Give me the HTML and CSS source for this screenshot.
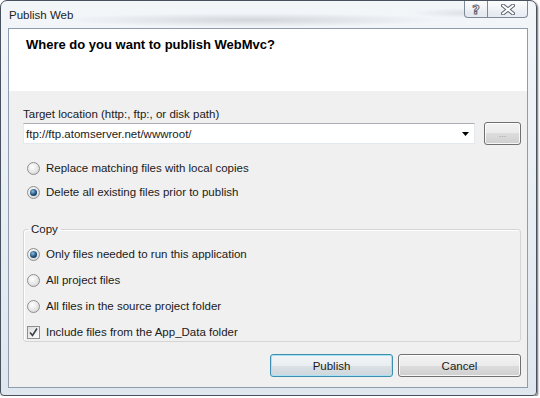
FILE: index.html
```html
<!DOCTYPE html>
<html lang="en">
  <head>
    <meta charset="UTF-8" />
    <title>Publish Web</title>
    <link rel="stylesheet" href="styles.css">
  </head>
  <body>
    <div class="window">
      <div class="titlebar">
        <span class="title">Publish Web</span>
        <div class="caption-buttons">
          <span class="cap-btn help">?</span>
          <span class="cap-btn close">
            <svg width="14" height="11" viewBox="0 0 14 11">
              <path d="M2 1.5 L12 9.5 M12 1.5 L2 9.5" stroke="#5a6470" stroke-width="4" stroke-linecap="round" fill="none" />
              <path d="M2 1.5 L12 9.5 M12 1.5 L2 9.5" stroke="#fff" stroke-width="2" stroke-linecap="round" fill="none" />
            </svg>
          </span>
        </div>
      </div>

      <div class="client">
        <div class="header">
          <h1>Where do you want to publish WebMvc?</h1>
        </div>

        <div class="content">
          <label class="field-label">Target location (http:, ftp:, or disk path)</label>
          <div class="location-row">
            <div class="combo">
              <span>ftp://ftp.atomserver.net/wwwroot/</span>
              <svg width="7" height="4" viewBox="0 0 7 4"><path d="M0 0 H7 L3.5 4 Z" fill="#000" /></svg>
            </div>
            <button class="btn browse">...</button>
          </div>

          <div class="options">
            <div class="option"><span class="radio"></span>Replace matching files with local copies</div>
            <div class="option"><span class="radio checked"></span>Delete all existing files prior to publish</div>
          </div>

          <fieldset class="group">
            <legend>Copy</legend>
            <div class="group-body">
              <div class="option"><span class="radio checked"></span>Only files needed to run this application</div>
              <div class="option"><span class="radio"></span>All project files</div>
              <div class="option"><span class="radio"></span>All files in the source project folder</div>
              <div class="option">
                <span class="checkbox">
                  <svg width="11" height="11" viewBox="0 0 11 11"><path d="M2 5.5 L4.5 8.5 L9 1.5" stroke="#3a3f4a" stroke-width="1.6" fill="none" /></svg>
                </span>
                Include files from the App_Data folder
              </div>
            </div>
          </fieldset>

          <div class="actions">
            <button class="btn default">Publish</button>
            <button class="btn">Cancel</button>
          </div>
        </div>
      </div>
    </div>
  </body>
</html>
```

FILE: styles.css
```css
body {
  margin: 0;
  font-family: "Liberation Sans", Arial, sans-serif;
  font-size: 11.5px;
  color: #1a1a1a;
  background: #ffffff;
}
.window {
  box-sizing: border-box;
  width: 537px;
  height: 396px;
  padding: 0 8px 7px 7px;
  border: 1px solid #48525e;
  border-radius: 7px 7px 4px 4px;
  /* blurred glass behind the title */
  background:
    radial-gradient(ellipse 190px 7px at 250px 19px, rgba(150, 158, 168, 0.35), rgba(150, 158, 168, 0) 100%),
    radial-gradient(ellipse 60px 5px at 470px 12px, rgba(150, 158, 168, 0.25), rgba(150, 158, 168, 0) 100%),
    linear-gradient(#f3f6f9, #dfe6ee);
  box-shadow: 1px 1px 2px rgba(0, 0, 0, 0.6);
  display: flex;
  flex-direction: column;
}
.titlebar {
  height: 27px;
  display: flex;
  justify-content: space-between;
  align-items: flex-start;
}
.title {
  padding: 7px 0 0 1px;
  line-height: 14px;
  color: #222;
}
.caption-buttons {
  display: flex;
}
.cap-btn {
  box-sizing: border-box;
  height: 17px;
  border: 1px solid #7f8a96;
  border-top: none;
  background: linear-gradient(rgba(255, 255, 255, 0.7), rgba(225, 232, 240, 0.7));
  display: flex;
  align-items: center;
  justify-content: center;
}
.help {
  width: 24px;
  border-radius: 0 0 0 4px;
  font-family: "DejaVu Sans", sans-serif;
  font-weight: bold;
  font-size: 13px;
  color: #fff;
  -webkit-text-stroke: 1px #5a6470;
}
.close {
  width: 40px;
  border-left: none;
  border-radius: 0 0 4px 0;
}
.client {
  box-sizing: border-box;
  height: 360px;
  border: 1px solid #8e9cad;
  background: #f0f0f0;
  display: flex;
  flex-direction: column;
}
.header {
  box-sizing: border-box;
  height: 62px;
  padding: 8px 0 0 17px;
  background: #ffffff;
}
.header h1 {
  margin: 0;
  font-size: 13px;
  line-height: 15px;
  color: #000;
}
.content {
  flex: 1;
  padding: 16px 6px 0 14px;
  display: flex;
  flex-direction: column;
}
.field-label {
  display: block;
  line-height: 15px;
}
.location-row {
  height: 23px;
  display: flex;
  align-items: center;
  gap: 9px;
}
.combo {
  flex: 1;
  box-sizing: border-box;
  height: 21px;
  padding: 0 5px 0 2px;
  border: 1px solid #e3e9ef;
  border-top-color: #abadb3;
  background: #ffffff;
  display: flex;
  align-items: center;
  justify-content: space-between;
}
.btn {
  box-sizing: border-box;
  height: 23px;
  padding: 0;
  font: inherit;
  color: #1a1a1a;
  border: 1px solid #707070;
  border-radius: 3px;
  background: linear-gradient(#f2f2f2 0%, #ebebeb 50%, #dddddd 50%, #cfcfcf 100%);
  box-shadow: inset 0 0 0 1px rgba(255, 255, 255, 0.8);
}
.browse {
  width: 37px;
  color: #a0a0a0;
  font-size: 9px;
}
.btn.default {
  border-color: #3c8fb0;
  box-shadow: inset 0 0 0 1px #a9e2f3;
  background: linear-gradient(#f2f5f7 0%, #eaeef1 50%, #dbe1e5 50%, #cfd7dc 100%);
}
.options {
  margin-top: 11px;
}
.options .option {
  height: 24px;
  padding-left: 4px;
}
.option {
  display: flex;
  align-items: center;
  gap: 6px;
  line-height: 15px;
}
.radio {
  flex: none;
  box-sizing: border-box;
  width: 13px;
  height: 13px;
  border: 1px solid #8e8f8f;
  border-radius: 50%;
  background: radial-gradient(circle at 40% 35%, #ffffff, #e6e6e6 55%, #cbcbcb);
  display: flex;
  align-items: center;
  justify-content: center;
}
.radio.checked::after {
  content: "";
  width: 7px;
  height: 7px;
  border-radius: 50%;
  background: radial-gradient(circle at 40% 35%, #8fc0e4, #1f4e79 55%, #0d2a4a);
}
.checkbox {
  flex: none;
  box-sizing: border-box;
  width: 13px;
  height: 13px;
  border: 1px solid #8e8f8f;
  background: linear-gradient(135deg, #dcdcdc, #ffffff);
  display: flex;
  align-items: center;
  justify-content: center;
}
.group {
  margin: 18px 0 0;
  padding: 0;
  min-width: 0;
  border: 1px solid #d5d5d5;
  border-radius: 3px;
  box-shadow: inset 1px 1px 0 #ffffff;
}
.group legend {
  margin-left: 4px;
  padding: 0 3px;
  line-height: 15px;
}
.group-body {
  padding: 10px 0 1px 3px;
  display: flex;
  flex-direction: column;
  gap: 11px;
}
.actions {
  margin-top: 12px;
  display: flex;
  justify-content: flex-end;
  gap: 5px;
}
.actions .btn {
  width: 123px;
}
```
